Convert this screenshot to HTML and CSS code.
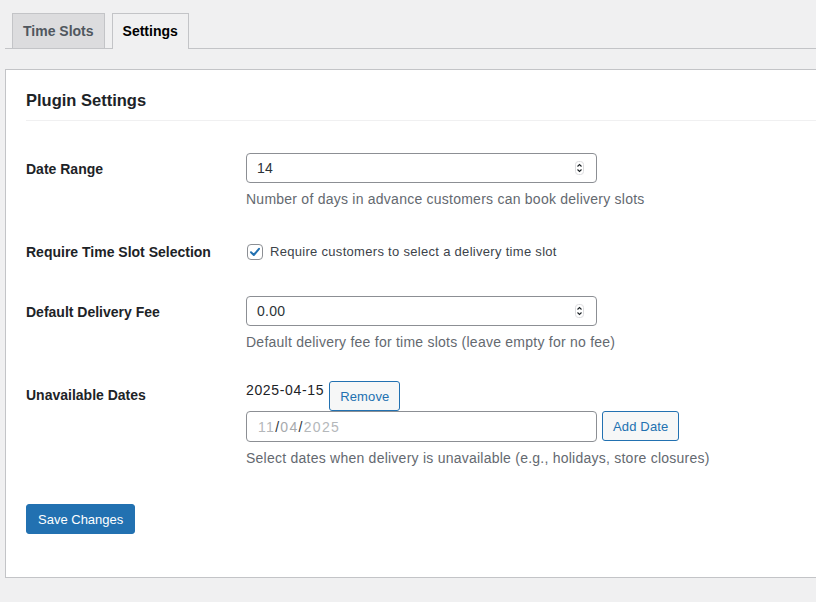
FILE: index.html
```html
<!DOCTYPE html>
<html>
<head>
<meta charset="utf-8">
<link rel="stylesheet" href="styles.css">
</head>
<body>
<div class="wrap">
  <nav class="tabs">
    <span class="tab">Time Slots</span>
    <span class="tab tab-active">Settings</span>
  </nav>
  <div class="panel">
    <h2 class="title">Plugin Settings</h2>
    <div class="row row-1">
      <div class="label">Date Range</div>
      <div class="field">
        <div class="input"><span>14</span><svg class="spin" width="9" height="14" viewBox="0 0 9 14"><rect x="0.5" y="0.5" width="8" height="13" rx="3" fill="#fff" stroke="#dcdcde"/><path d="M2.5 5.5 L4.5 3.5 L6.5 5.5 M2.5 8.5 L4.5 10.5 L6.5 8.5" fill="none" stroke="#1d2327" stroke-width="1.1"/></svg></div>
        <p class="desc">Number of days in advance customers can book delivery slots</p>
      </div>
    </div>
    <div class="row row-2">
      <div class="label">Require Time Slot Selection</div>
      <div class="field">
        <label class="check"><span class="box"><svg width="14" height="14" viewBox="0 0 14 14"><path d="M3 7.2 L5.8 10 L11 3.8" fill="none" stroke="#2271b1" stroke-width="2" stroke-linecap="round" stroke-linejoin="round"/></svg></span>Require customers to select a delivery time slot</label>
      </div>
    </div>
    <div class="row row-3">
      <div class="label">Default Delivery Fee</div>
      <div class="field">
        <div class="input"><span>0.00</span><svg class="spin" width="9" height="14" viewBox="0 0 9 14"><rect x="0.5" y="0.5" width="8" height="13" rx="3" fill="#fff" stroke="#dcdcde"/><path d="M2.5 5.5 L4.5 3.5 L6.5 5.5 M2.5 8.5 L4.5 10.5 L6.5 8.5" fill="none" stroke="#1d2327" stroke-width="1.1"/></svg></div>
        <p class="desc">Default delivery fee for time slots (leave empty for no fee)</p>
      </div>
    </div>
    <div class="row row-4">
      <div class="label">Unavailable Dates</div>
      <div class="field">
        <div class="date-item"><span class="date-text">2025-04-15</span><span class="btn btn-remove">Remove</span></div>
        <div class="date-add">
          <div class="input date-input"><span class="ph">11</span><span class="sep">/</span><span class="ph ph-mid">04</span><span class="sep">/</span><span class="ph">2025</span></div>
          <span class="btn">Add Date</span>
        </div>
        <p class="desc">Select dates when delivery is unavailable (e.g., holidays, store closures)</p>
      </div>
    </div>
    <div class="actions">
      <span class="btn-primary">Save Changes</span>
    </div>
  </div>
</div>
</body>
</html>
```
FILE: styles.css
```css
html, body {
  margin: 0;
  padding: 0;
  background: #f0f0f1;
  overflow: hidden;
}
body {
  font-family: "Liberation Sans", Arial, sans-serif;
  color: #3c434a;
  font-size: 13px;
  width: 816px;
  height: 602px;
}
.wrap {
  padding-left: 5px;
}
.tabs {
  display: flex;
  padding-top: 13px;
  border-bottom: 1px solid #c3c4c7;
  height: 35px;
  box-sizing: content-box;
  margin-right: -30px;
}
.tab {
  display: block;
  margin-left: 7px;
  padding: 5px 10px;
  font-size: 14px;
  font-weight: 700;
  line-height: 24px;
  color: #50575e;
  background: #dcdcde;
  border: 1px solid #c3c4c7;
  border-bottom: none;
  height: 24px;
}
.tab + .tab {
  margin-left: 7px;
}
.tab-active {
  background: #f0f0f1;
  color: #000;
  height: 25px;
}
.panel {
  margin-top: 20px;
  margin-right: -40px;
  background: #fff;
  border: 1px solid #c3c4c7;
  padding: 0 20px 44px 20px;
  height: 463px;
  box-sizing: content-box;
}
.title {
  margin: 0;
  padding: 20px 0 10px;
  font-size: 16.5px;
  line-height: 20px;
  font-weight: 700;
  color: #1d2327;
  border-bottom: 1px solid #f0f0f1;
}
.row {
  display: flex;
}
.label {
  width: 220px;
  flex: none;
  font-size: 14px;
  font-weight: 700;
  line-height: 20px;
  color: #1d2327;
}
.field {
  flex: 1;
}
.row-1 { margin-top: 17px; }
.row-1 .label { padding-top: 21px; }
.row-1 .field { padding-top: 15px; }
.row-2 { margin-top: 33px; }
.row-3 { margin-top: 34px; }
.row-3 .label { padding-top: 6px; }
.row-4 { margin-top: 28px; }
.row-4 .label { padding-top: 5px; }

.input {
  width: 351px;
  height: 30px;
  box-sizing: border-box;
  border: 1px solid #8c8f94;
  border-radius: 4px;
  padding: 0 12px 0 10px;
  display: flex;
  align-items: center;
  justify-content: space-between;
  font-size: 14px;
  color: #2c3338;
  background: #fff;
  letter-spacing: 0.3px;
}
.spin {
  display: block;
}
.desc {
  margin: 6px 0 0;
  font-size: 14px;
  line-height: 20px;
  color: #646970;
  letter-spacing: 0.24px;
}
.check {
  display: flex;
  align-items: center;
  font-size: 13px;
  line-height: 20px;
  color: #3c434a;
  letter-spacing: 0.3px;
}
.box {
  width: 16px;
  height: 16px;
  box-sizing: border-box;
  border: 1px solid #8c8f94;
  border-radius: 4px;
  margin-left: 1px;
  margin-right: 7px;
  display: flex;
  align-items: center;
  justify-content: center;
  background: #fff;
}
.date-item {
  display: flex;
  align-items: flex-start;
}
.date-text {
  font-size: 14px;
  line-height: 20px;
  color: #1d2327;
  letter-spacing: 0.65px;
}
.btn {
  display: inline-flex;
  align-items: center;
  height: 30px;
  box-sizing: border-box;
  padding: 0 10px;
  border: 1px solid #2271b1;
  border-radius: 3px;
  background: #f6f7f7;
  color: #2271b1;
  font-size: 13px;
  letter-spacing: 0.15px;
}
.btn-remove {
  margin-top: 1px;
  margin-left: 5px;
}
.date-add {
  display: flex;
  gap: 5px;
}
.date-input {
  justify-content: flex-start;
  height: 31px;
  padding-left: 11px;
  letter-spacing: 1.3px;
}
.ph { color: #b4b7ba; }
.ph-mid { color: #a7aaad; }
.sep { color: #2c3338; }
.actions {
  margin-top: 36px;
}
.btn-primary {
  display: inline-flex;
  align-items: center;
  height: 30px;
  box-sizing: border-box;
  padding: 0 11px;
  background: #2271b1;
  border: 1px solid #2271b1;
  border-radius: 3px;
  color: #fff;
  font-size: 13px;
}
```
